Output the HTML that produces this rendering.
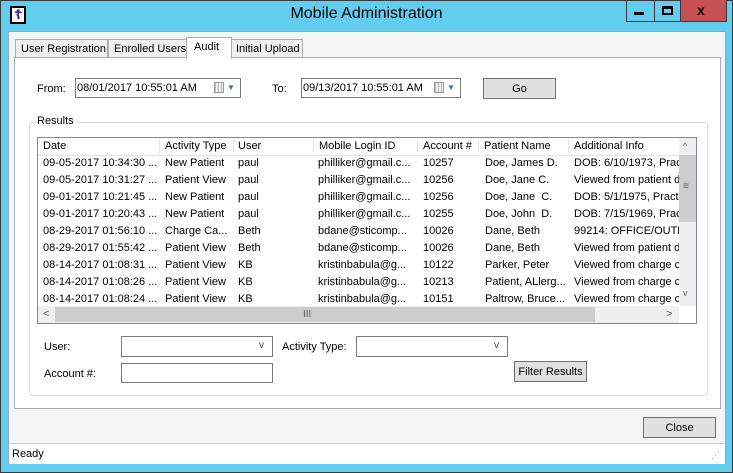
<!DOCTYPE html>
<html><head><style>
*{box-sizing:border-box;margin:0;padding:0}
body{width:733px;height:473px;overflow:hidden;background:#62cdef;font-family:"Liberation Sans",sans-serif;font-size:11px;color:#000;position:relative}
.a{position:absolute}
.frame{left:0;top:0;width:733px;height:473px;border:1px solid #3a3a3a}
.client{left:8px;top:31px;width:718px;height:433px;background:#f5f5f5;border:1px solid #9aa8b4}
.tab{top:39px;height:19px;border:1px solid #acacac;border-bottom:none;background:#f0f0f0;padding:3px 5px 0 5px;white-space:nowrap}
.panel{left:14px;top:57px;width:707px;height:352px;border:1px solid #acacac;background:#fff}
.box{border:1px solid #7a7a7a;background:#fff}
.btn{border:1px solid #707070;background:#e1e1e1;text-align:center}
.grid{left:37px;top:137px;width:660px;height:187px;border:1px solid #828790;background:#fff;overflow:hidden}
.row{position:absolute;left:0;height:17px;width:660px}
.row span{position:absolute;top:2px;white-space:nowrap;overflow:hidden}
.hdr{top:0;height:18px;border-bottom:1px solid #e5e5e5}
.hdr i{position:absolute;top:1px;width:1px;height:15px;background:#e5e5e5}
</style></head><body>
<div class="a frame"></div>
<div class="a" style="left:10px;top:6px;width:16px;height:18px;border:2px solid #000;background:#fff"></div>
<div class="a" style="left:14px;top:7px;color:#4a2a8a;font-size:13px;font-weight:bold">☦</div>
<div class="a" style="left:0;top:5px;width:733px;text-align:center;font-size:16px;color:#000">Mobile Administration</div>
<div class="a" style="left:626px;top:0;width:101px;height:22px;border:1px solid #3a3a3a;border-top:none"></div>
<div class="a" style="left:654px;top:0;width:1px;height:22px;background:#3a3a3a"></div>
<div class="a" style="left:680px;top:0;width:1px;height:22px;background:#3a3a3a"></div>
<div class="a" style="left:681px;top:0;width:45px;height:21px;background:#c75050"></div>
<div class="a" style="left:634px;top:12px;width:10px;height:3px;background:#000"></div>
<div class="a" style="left:662px;top:6px;width:11px;height:9px;border:2px solid #000;border-top-width:3px"></div>
<div class="a" style="left:697px;top:2px;font-size:14px;font-weight:bold">x</div>
<div class="a client"></div>
<div class="a tab" style="left:15px;width:93px">User Registration</div>
<div class="a tab" style="left:108px;width:80px">Enrolled Users</div>
<div class="a tab" style="left:230px;width:73px">Initial Upload</div>
<div class="a panel"></div>
<div class="a tab" style="left:186px;top:37px;height:22px;width:46px;background:#fff;z-index:2;padding-top:3px;padding-left:7px">Audit</div>
<div class="a" style="left:37px;top:83px">From:</div>
<div class="a box" style="left:75px;top:78px;width:166px;height:20px;padding:3px 1px">08/01/2017 10:55:01 AM</div>
<div class="a" style="left:214px;top:82px;width:10px;height:11px;border:1px solid #999;background:repeating-linear-gradient(90deg,#bbb 0 1px,#eee 1px 3px)"></div>
<div class="a" style="left:227px;top:83px;color:#4a6a9a;font-size:8px">▼</div>
<div class="a" style="left:272px;top:83px">To:</div>
<div class="a box" style="left:301px;top:78px;width:160px;height:20px;padding:3px 1px">09/13/2017 10:55:01 AM</div>
<div class="a" style="left:434px;top:82px;width:10px;height:11px;border:1px solid #999;background:repeating-linear-gradient(90deg,#bbb 0 1px,#eee 1px 3px)"></div>
<div class="a" style="left:447px;top:83px;color:#4a6a9a;font-size:8px">▼</div>
<div class="a btn" style="left:483px;top:78px;width:73px;height:21px;padding-top:4px">Go</div>
<div class="a" style="left:29px;top:122px;width:679px;height:274px;border:1px solid #dcdcdc;border-radius:3px"></div>
<div class="a" style="left:35px;top:115px;background:#fff;padding:0 2px">Results</div>
<div class="a grid">
<div class="row hdr"><span style="left:5px">Date</span><i style="left:121px"></i><span style="left:127px">Activity Type</span><i style="left:195px"></i><span style="left:200px">User</span><i style="left:275px"></i><span style="left:281px">Mobile Login ID</span><i style="left:379px"></i><span style="left:385px">Account #</span><i style="left:440px"></i><span style="left:446px">Patient Name</span><i style="left:530px"></i><span style="left:536px">Additional Info</span></div>
<div class="row" style="top:17px"><span style="left:5px">09-05-2017 10:34:30 ...</span><span style="left:127px">New Patient</span><span style="left:200px">paul</span><span style="left:280px">philliker@gmail.c...</span><span style="left:385px">10257</span><span style="left:447px">Doe, James D.</span><span style="left:536px;width:105px">DOB: 6/10/1973, Practice</span></div>
<div class="row" style="top:34px"><span style="left:5px">09-05-2017 10:31:27 ...</span><span style="left:127px">Patient View</span><span style="left:200px">paul</span><span style="left:280px">philliker@gmail.c...</span><span style="left:385px">10256</span><span style="left:447px">Doe, Jane C.</span><span style="left:536px;width:105px">Viewed from patient detail</span></div>
<div class="row" style="top:51px"><span style="left:5px">09-01-2017 10:21:45 ...</span><span style="left:127px">New Patient</span><span style="left:200px">paul</span><span style="left:280px">philliker@gmail.c...</span><span style="left:385px">10256</span><span style="left:447px">Doe, Jane&nbsp; C.</span><span style="left:536px;width:105px">DOB: 5/1/1975, Practice</span></div>
<div class="row" style="top:68px"><span style="left:5px">09-01-2017 10:20:43 ...</span><span style="left:127px">New Patient</span><span style="left:200px">paul</span><span style="left:280px">philliker@gmail.c...</span><span style="left:385px">10255</span><span style="left:447px">Doe, John&nbsp; D.</span><span style="left:536px;width:105px">DOB: 7/15/1969, Practice</span></div>
<div class="row" style="top:85px"><span style="left:5px">08-29-2017 01:56:10 ...</span><span style="left:127px">Charge Ca...</span><span style="left:200px">Beth</span><span style="left:280px">bdane@sticomp...</span><span style="left:385px">10026</span><span style="left:447px">Dane, Beth</span><span style="left:536px;width:105px">99214: OFFICE/OUTPT</span></div>
<div class="row" style="top:102px"><span style="left:5px">08-29-2017 01:55:42 ...</span><span style="left:127px">Patient View</span><span style="left:200px">Beth</span><span style="left:280px">bdane@sticomp...</span><span style="left:385px">10026</span><span style="left:447px">Dane, Beth</span><span style="left:536px;width:105px">Viewed from patient detail</span></div>
<div class="row" style="top:119px"><span style="left:5px">08-14-2017 01:08:31 ...</span><span style="left:127px">Patient View</span><span style="left:200px">KB</span><span style="left:280px">kristinbabula@g...</span><span style="left:385px">10122</span><span style="left:447px">Parker, Peter</span><span style="left:536px;width:105px">Viewed from charge capture</span></div>
<div class="row" style="top:136px"><span style="left:5px">08-14-2017 01:08:26 ...</span><span style="left:127px">Patient View</span><span style="left:200px">KB</span><span style="left:280px">kristinbabula@g...</span><span style="left:385px">10213</span><span style="left:447px">Patient, ALlerg...</span><span style="left:536px;width:105px">Viewed from charge capture</span></div>
<div class="row" style="top:153px"><span style="left:5px">08-14-2017 01:08:24 ...</span><span style="left:127px">Patient View</span><span style="left:200px">KB</span><span style="left:280px">kristinbabula@g...</span><span style="left:385px">10151</span><span style="left:447px">Paltrow, Bruce...</span><span style="left:536px;width:105px">Viewed from charge capture</span></div>
<div class="a" style="left:641px;top:0;width:17px;height:168px;background:#f0f0f0"></div>
<div class="a" style="left:641px;top:17px;width:17px;height:67px;background:#cdcdcd"></div>
<div class="a" style="left:645px;top:3px;font-size:9px;color:#606060">^</div>
<div class="a" style="left:645px;top:43px;font-size:10px;color:#606060">≡</div>
<div class="a" style="left:645px;top:150px;font-size:9px;color:#606060">v</div>
<div class="a" style="left:0;top:168px;width:641px;height:17px;background:#f0f0f0"></div>
<div class="a" style="left:17px;top:169px;width:540px;height:15px;background:#cdcdcd"></div>
<div class="a" style="left:5px;top:170px;color:#606060">&lt;</div>
<div class="a" style="left:265px;top:171px;font-size:10px;color:#606060">III</div>
<div class="a" style="left:628px;top:170px;color:#606060">&gt;</div>
</div>
<div class="a" style="left:44px;top:341px">User:</div>
<div class="a box" style="left:121px;top:336px;width:152px;height:21px"></div>
<div class="a" style="left:259px;top:340px;font-size:10px;color:#444">v</div>
<div class="a" style="left:282px;top:341px">Activity Type:</div>
<div class="a box" style="left:356px;top:336px;width:152px;height:21px"></div>
<div class="a" style="left:494px;top:340px;font-size:10px;color:#444">v</div>
<div class="a" style="left:44px;top:368px">Account #:</div>
<div class="a box" style="left:121px;top:363px;width:152px;height:20px"></div>
<div class="a btn" style="left:514px;top:361px;width:73px;height:21px;padding-top:4px">Filter Results</div>
<div class="a btn" style="left:643px;top:417px;width:73px;height:21px;padding-top:4px">Close</div>
<div class="a" style="left:9px;top:443px;width:716px;height:21px;background:#fff;border-top:1px solid #d0d0d0"></div>
<div class="a" style="left:12px;top:448px">Ready</div>
<div class="a" style="left:711px;top:450px;font-size:9px;color:#aaa;letter-spacing:-1px">⋰</div>
</body></html>
